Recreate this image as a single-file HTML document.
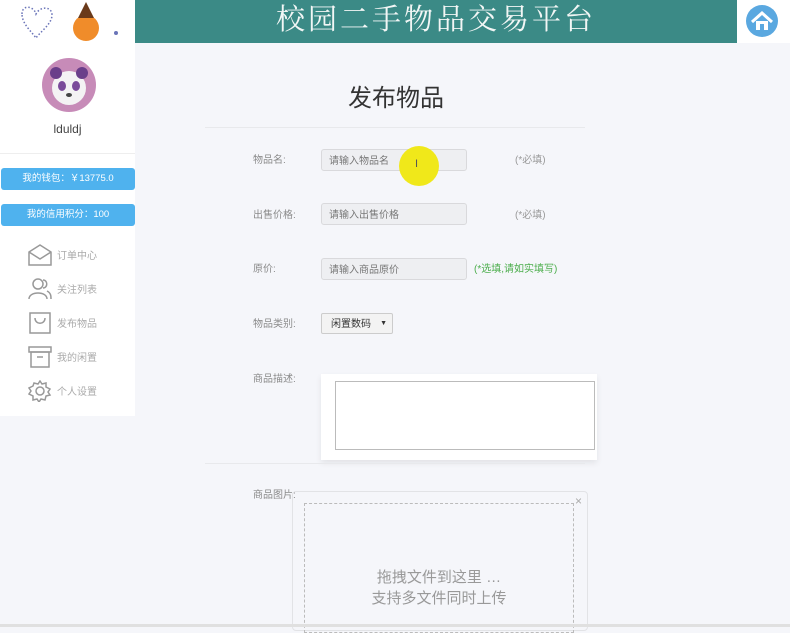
<!DOCTYPE html>
<html><head><meta charset="utf-8"><style>
*{margin:0;padding:0;box-sizing:border-box}
body{width:790px;height:627px;overflow:hidden;background:#f5f6fa;font-family:"Liberation Sans","Noto Sans CJK SC",sans-serif;position:relative;color:#888;line-height:1.2}
.abs{position:absolute}
.lbl{position:absolute;left:253px;font-size:10px;color:#8a8a8a}
.inp{position:absolute;left:321px;width:146px;height:22px;background:#eeeff2;border:1px solid #d9d9dc;border-radius:3px;font-size:10px;color:#777;padding:2px 7px 0;line-height:20px}
.req{position:absolute;left:515px;font-size:10px;color:#999}
.btn{position:absolute;left:1px;width:134px;height:22px;background:#4fb2ee;border-radius:3px;color:#fff;font-size:9.5px;text-align:center;line-height:22px}
.nav{position:absolute;left:28px;font-size:10px;color:#aaa}
.nav svg{position:absolute;left:0;top:-6px}
.nav span{position:absolute;left:29px;top:1px;white-space:nowrap}
</style></head><body>
<div class="abs" style="left:0;top:0;width:135px;height:43px;background:#fff"></div>
<svg class="abs" style="left:18px;top:2px" width="100" height="40">
<path d="M4 12 C4 2 16 4 18 12 C22 4 34 4 34 13 C34 22 22 30 18 36 C14 30 4 22 4 12Z" fill="none" stroke="#6a74b8" stroke-dasharray="1.5 2" stroke-width="1.5"/>
<circle cx="68" cy="26" r="13" fill="#f08c2a"/><path d="M60 16 L68 0 L76 16Z" fill="#6a3a1a"/>
<circle cx="98" cy="31" r="2" fill="#6a74b8"/></svg>
<div class="abs" style="left:135px;top:0;width:602px;height:43px;background:#3b8a86;color:#f2f6f5;font-size:29px;letter-spacing:3px;text-align:center;line-height:40px;font-family:'Liberation Serif','Noto Serif CJK SC',serif">校园二手物品交易平台</div>
<div class="abs" style="left:737px;top:0;width:53px;height:43px;background:#fff"></div>
<svg class="abs" style="left:745px;top:4px" width="34" height="34"><circle cx="17" cy="17" r="16" fill="#5aa8e0"/><path d="M7 18 L17 9 L27 18" fill="none" stroke="#fff" stroke-width="3"/><path d="M11 17 V26 H23 V17" fill="#fff"/><rect x="15" y="20" width="4" height="6" fill="#5aa8e0"/></svg>
<div class="abs" style="left:0;top:43px;width:135px;height:373px;background:#fff"></div>
<div class="abs" style="left:0;top:153px;width:135px;height:1px;background:#eee"></div>
<svg class="abs" style="left:41px;top:57px" width="56" height="56"><circle cx="28" cy="28" r="27" fill="#c78bb8"/><circle cx="28" cy="31" r="17" fill="#f4f2f4"/><circle cx="15" cy="16" r="6" fill="#6a3e8a"/><circle cx="41" cy="16" r="6" fill="#6a3e8a"/><ellipse cx="21" cy="29" rx="4" ry="5" fill="#7a4a9a"/><ellipse cx="35" cy="29" rx="4" ry="5" fill="#7a4a9a"/><ellipse cx="28" cy="38" rx="3" ry="2" fill="#444"/></svg>
<div class="abs" style="left:0;top:122px;width:135px;text-align:center;font-size:12px;color:#444">lduldj</div>
<div class="btn" style="top:168px">我的钱包：￥13775.0</div>
<div class="btn" style="top:204px">我的信用积分：100</div>
<div class="nav" style="top:250px"><svg width="24" height="22" fill="none" stroke="#999" stroke-width="1.5"><path d="M1 8 L12 1 L23 8 V21 H1Z M1 8 L12 15 L23 8"/></svg><span>订单中心</span></div>
<div class="nav" style="top:284px"><svg width="24" height="22" fill="none" stroke="#999" stroke-width="1.5"><circle cx="10" cy="6" r="5"/><path d="M1 21 C1 13 19 13 19 21 M15 2 C20 2 20 10 15 10 M19 13 C23 15 23 18 23 21"/></svg><span>关注列表</span></div>
<div class="nav" style="top:318px"><svg width="24" height="22" fill="none" stroke="#999" stroke-width="1.5"><rect x="2" y="1" width="20" height="20"/><path d="M7 6 C7 13 17 13 17 6"/></svg><span>发布物品</span></div>
<div class="nav" style="top:352px"><svg width="24" height="22" fill="none" stroke="#999" stroke-width="1.5"><rect x="1" y="1" width="22" height="5"/><rect x="3" y="6" width="18" height="15"/><path d="M9 11 H15"/></svg><span>我的闲置</span></div>
<div class="nav" style="top:386px"><svg width="24" height="22" fill="none" stroke="#999" stroke-width="1.5"><circle cx="12" cy="11" r="4"/><path d="M12 1 L14 4 L18 3 L18 7 L22 9 L20 12 L22 15 L18 16 L17 20 L13 19 L11 22 L9 19 L5 20 L5 16 L1 14 L3 11 L1 8 L5 6 L6 3 L10 4Z"/></svg><span>个人设置</span></div>
<div class="abs" style="left:348px;top:85px;font-size:24px;color:#333">发布物品</div>
<div class="abs" style="left:205px;top:127px;width:380px;height:1px;background:#e8e9ec"></div>
<div class="lbl" style="top:155px">物品名:</div><div class="inp" style="top:149px">请输入物品名</div><div class="req" style="top:155px">(*必填)</div>
<div class="abs" style="left:399px;top:146px;width:40px;height:40px;border-radius:50%;background:#f0e81a"></div>
<div class="abs" style="left:415px;top:158px;font-size:11px;color:#555">I</div>
<div class="lbl" style="top:210px">出售价格:</div><div class="inp" style="top:203px">请输入出售价格</div><div class="req" style="top:210px">(*必填)</div>
<div class="lbl" style="top:264px">原价:</div><div class="inp" style="top:258px">请输入商品原价</div><div class="req" style="top:264px;left:474px;color:#4cae4c">(*选填,请如实填写)</div>
<div class="lbl" style="top:319px">物品类别:</div>
<div class="abs" style="left:321px;top:313px;width:72px;height:21px;background:#f3f3f3;border:1px solid #ccc;border-radius:2px;font-size:10px;color:#333;padding:1px 9px 0;line-height:20px">闲置数码<span style="position:absolute;right:5px;top:0;font-size:7px">▼</span></div>
<div class="lbl" style="top:374px">商品描述:</div>
<div class="abs" style="left:321px;top:374px;width:276px;height:86px;background:#fff;box-shadow:0 3px 6px rgba(0,0,0,.08)"></div>
<div class="abs" style="left:335px;top:381px;width:260px;height:69px;background:#fff;border:1px solid #bbb"></div>
<div class="abs" style="left:205px;top:463px;width:380px;height:1px;background:#e8e9ec"></div>
<div class="lbl" style="top:490px">商品图片:</div>
<div class="abs" style="left:292px;top:491px;width:296px;height:140px;border:1px solid #e2e3e6;border-radius:4px"></div>
<div class="abs" style="left:304px;top:503px;width:270px;height:130px;border:1px dashed #bbb"></div>
<div class="abs" style="left:575px;top:494px;font-size:12px;color:#aaa">×</div>
<div class="abs" style="left:304px;top:567px;width:270px;text-align:center;font-size:15px;color:#999;line-height:21px">拖拽文件到这里 …<br>支持多文件同时上传</div>
<div class="abs" style="left:0;top:624px;width:790px;height:3px;background:#e0e0e0"></div>
</body></html>
